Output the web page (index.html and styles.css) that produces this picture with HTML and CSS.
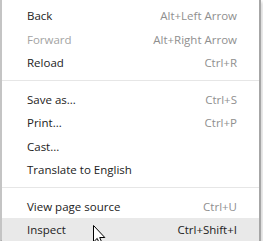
FILE: index.html
```html
<!DOCTYPE html>
<html lang="en">
<head>
  <meta charset="UTF-8">
  <title>Context menu</title>
  <link rel="stylesheet" href="styles.css">
</head>
<body>
  <div class="menu">
    <div class="item"><span>Back</span><span class="key">Alt+Left Arrow</span></div>
    <div class="item disabled"><span>Forward</span><span class="key">Alt+Right Arrow</span></div>
    <div class="item"><span>Reload</span><span class="key">Ctrl+R</span></div>
    <div class="sep"></div>
    <div class="item"><span>Save as...</span><span class="key">Ctrl+S</span></div>
    <div class="item"><span>Print...</span><span class="key">Ctrl+P</span></div>
    <div class="item"><span>Cast...</span></div>
    <div class="item"><span>Translate to English</span></div>
    <div class="sep"></div>
    <div class="item"><span>View page source</span><span class="key">Ctrl+U</span></div>
    <div class="item active"><span>Inspect</span><span class="key">Ctrl+Shift+I</span></div>

    <!-- mouse pointer over the hovered row -->
    <svg class="cursor" width="14" height="21" viewBox="0 0 14 21">
      <path d="M0.5 0.5 L0.5 17 L4.2 13.4 L7 19.8 L9.4 18.7 L6.7 12.5 L11.8 12.5 Z" fill="#fff" stroke="#000" stroke-width="1" stroke-linejoin="miter"/>
    </svg>
  </div>
</body>
</html>
```

FILE: styles.css
```css
body {
  margin: 0;
  background: #fff;
  font-family: 'Open Sans', 'Noto Sans', Arial, sans-serif;
  font-size: 11.5px;
  color: #222;
}
.menu {
  position: relative;
  width: 257px;
  height: 236px;
  padding-top: 4px;
  background: #fff;
  border-left: 2px solid #c4c4c4;
  border-right: 2px solid #a6a6a6;
  border-bottom: 1px solid #a6a6a6;
  box-shadow: 2px 2px 3px rgba(0,0,0,0.15);
}
.item {
  display: flex;
  justify-content: space-between;
  align-items: center;
  height: 23.5px;
  padding: 0 22px 0 25px;
}
.item.disabled {
  color: #a3a3a3;
}
.item.active {
  background: #e9e9e9;
}
.key {
  color: #8f8f8f;
}
.active .key {
  color: #222;
}
.sep {
  height: 13px;
  position: relative;
}
.sep::after {
  content: '';
  position: absolute;
  left: 0;
  right: 0;
  top: 5px;
  border-top: 1px solid #e6e6e6;
}
.cursor {
  position: absolute;
  left: 91px;
  top: 225px;
}
```
